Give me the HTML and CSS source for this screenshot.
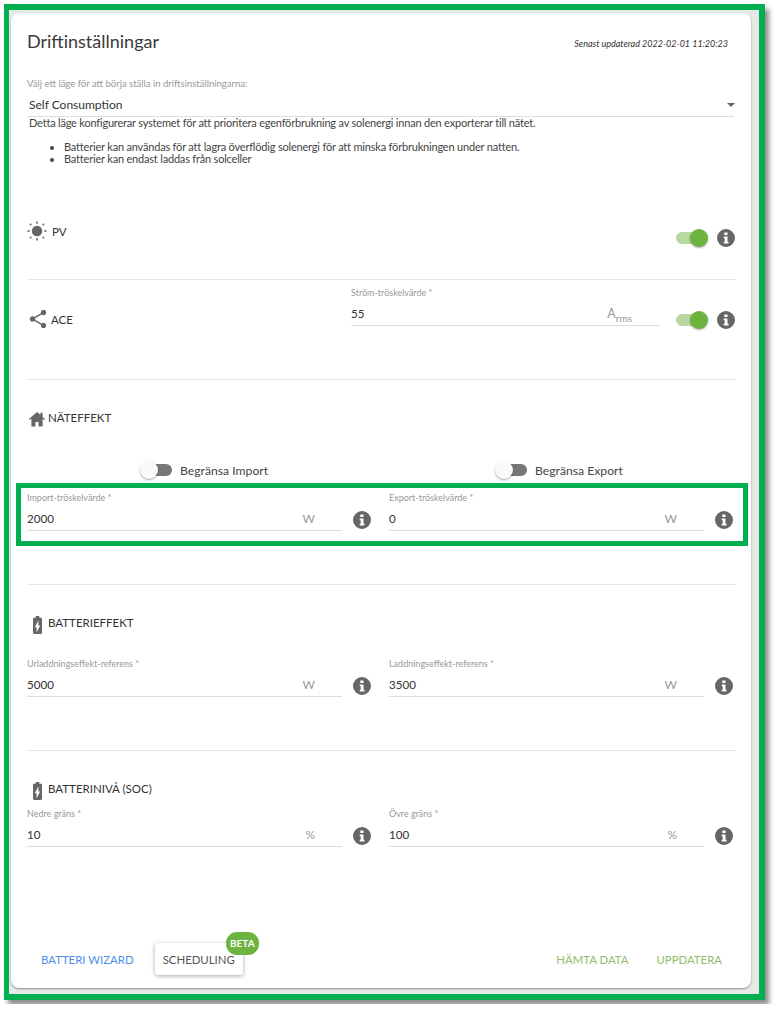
FILE: index.html
```html
<!DOCTYPE html>
<html lang="sv">
<head>
    <meta charset="UTF-8">
    <meta name="viewport" content="width=device-width, initial-scale=1.0">
    <title>Driftinställningar</title>
    <link rel="stylesheet" href="styles.css">
</head>
<body>
<svg class="icon-defs">
    <symbol id="i-sun" viewBox="0 0 20 20">
        <circle cx="10" cy="10" r="5.2"/>
        <rect x="9.2" y="0.5" width="1.6" height="2.2"/>
        <rect x="9.2" y="17.3" width="1.6" height="2.2"/>
        <rect x="0.5" y="9.2" width="2.2" height="1.6"/>
        <rect x="17.3" y="9.2" width="2.2" height="1.6"/>
        <circle cx="3.6" cy="3.6" r="1"/>
        <circle cx="16.4" cy="3.6" r="1"/>
        <circle cx="3.6" cy="16.4" r="1"/>
        <circle cx="16.4" cy="16.4" r="1"/>
    </symbol>
    <symbol id="i-share" viewBox="0 0 24 24">
        <path d="M18 16.08c-.76 0-1.44.3-1.96.77L8.91 12.7c.05-.23.09-.46.09-.7s-.04-.47-.09-.7l7.05-4.11c.54.5 1.25.81 2.04.81 1.66 0 3-1.34 3-3s-1.34-3-3-3-3 1.34-3 3c0 .24.04.47.09.7L8.04 9.81C7.5 9.31 6.79 9 6 9c-1.66 0-3 1.34-3 3s1.34 3 3 3c.79 0 1.5-.31 2.04-.81l7.12 4.16c-.05.21-.08.43-.08.65 0 1.61 1.31 2.92 2.92 2.92 1.61 0 2.92-1.31 2.92-2.92s-1.31-2.92-2.92-2.92z"/>
    </symbol>
    <symbol id="i-home" viewBox="0 0 16 15">
        <path d="M8 .5 0 7.6l.9 1L2.4 7.3V15h4v-4.6h3.2V15h4V7.3l1.5 1.3.9-1-2.4-2.1V1.2h-2.2v2.1z"/>
    </symbol>
    <symbol id="i-battery" viewBox="7 2 10 20">
        <path d="M15.67 4H14V2h-4v2H8.33C7.6 4 7 4.6 7 5.33v15.33C7 21.4 7.6 22 8.33 22h7.33c.74 0 1.34-.6 1.34-1.33V5.33C17 4.6 16.4 4 15.67 4zM11 20v-5.5H9L13 7v5.5h2L11 20z"/>
    </symbol>
    <symbol id="i-info" viewBox="0 0 18 18">
        <path fill-rule="evenodd" d="M9 0a9 9 0 1 0 0 18A9 9 0 0 0 9 0zM7.3 3.4h3.2v2.7H7.3zM6.7 7.4h3.8v5.4h1v1.8H6.7v-1.8h1V9.2h-1z"/>
    </symbol>
</svg>

<div class="frame">
    <div class="card">
        <div class="card-header">
            <h1 class="card-title">Driftinställningar</h1>
            <span class="updated">Senast updaterad 2022-02-01 11:20:23</span>
        </div>

        <div class="mode">
            <div class="field-label mode-label">Välj ett läge för att börja ställa in driftsinställningarna:</div>
            <div class="select">
                <span>Self Consumption</span>
                <span class="caret"></span>
            </div>
            <p class="mode-text">Detta läge konfigurerar systemet för att prioritera egenförbrukning av solenergi innan den exporterar till nätet.</p>
            <ul class="mode-list">
                <li>Batterier kan användas för att lagra överflödig solenergi för att minska förbrukningen under natten.</li>
                <li>Batterier kan endast laddas från solceller</li>
            </ul>
        </div>

        <section class="section section-pv">
            <div class="toggle-row">
                <div class="section-title title-pv">
                    <svg class="icon icon-sun"><use href="#i-sun"/></svg>
                    <span>PV</span>
                </div>
                <div class="controls">
                    <span class="switch switch-on"></span>
                    <svg class="info"><use href="#i-info"/></svg>
                </div>
            </div>
        </section>

        <section class="section section-ace">
            <div class="toggle-row">
                <div class="section-title title-ace">
                    <svg class="icon icon-share"><use href="#i-share"/></svg>
                    <span>ACE</span>
                </div>
                <div class="field field-ace">
                    <div class="field-label">Ström-tröskelvärde *</div>
                    <div class="field-input">
                        <span>55</span>
                        <span class="unit unit-arms">A<sub>rms</sub></span>
                    </div>
                </div>
                <div class="controls controls-ace">
                    <span class="switch switch-on"></span>
                    <svg class="info"><use href="#i-info"/></svg>
                </div>
            </div>
        </section>

        <section class="section section-grid">
            <div class="section-title">
                <svg class="icon icon-home"><use href="#i-home"/></svg>
                <span>NÄTEFFEKT</span>
            </div>
            <div class="fields limits">
                <label class="limit limit-import"><span class="switch"></span>Begränsa Import</label>
                <label class="limit limit-export"><span class="switch"></span>Begränsa Export</label>
            </div>
            <div class="highlight">
                <div class="fields">
                    <div class="field-cell">
                        <div class="field">
                            <div class="field-label">Import-tröskelvärde *</div>
                            <div class="field-input"><span>2000</span><span class="unit">W</span></div>
                        </div>
                        <svg class="info"><use href="#i-info"/></svg>
                    </div>
                    <div class="field-cell">
                        <div class="field">
                            <div class="field-label">Export-tröskelvärde *</div>
                            <div class="field-input"><span>0</span><span class="unit">W</span></div>
                        </div>
                        <svg class="info"><use href="#i-info"/></svg>
                    </div>
                </div>
            </div>
        </section>

        <section class="section section-power">
            <div class="section-title">
                <svg class="icon icon-battery"><use href="#i-battery"/></svg>
                <span>BATTERIEFFEKT</span>
            </div>
            <div class="fields">
                <div class="field-cell">
                    <div class="field">
                        <div class="field-label">Urladdningseffekt-referens *</div>
                        <div class="field-input"><span>5000</span><span class="unit">W</span></div>
                    </div>
                    <svg class="info"><use href="#i-info"/></svg>
                </div>
                <div class="field-cell">
                    <div class="field">
                        <div class="field-label">Laddningseffekt-referens *</div>
                        <div class="field-input"><span>3500</span><span class="unit">W</span></div>
                    </div>
                    <svg class="info"><use href="#i-info"/></svg>
                </div>
            </div>
        </section>

        <section class="section section-soc">
            <div class="section-title">
                <svg class="icon icon-battery"><use href="#i-battery"/></svg>
                <span>BATTERINIVÅ (SOC)</span>
            </div>
            <div class="fields">
                <div class="field-cell">
                    <div class="field">
                        <div class="field-label">Nedre gräns *</div>
                        <div class="field-input"><span>10</span><span class="unit">%</span></div>
                    </div>
                    <svg class="info"><use href="#i-info"/></svg>
                </div>
                <div class="field-cell">
                    <div class="field">
                        <div class="field-label">Övre gräns *</div>
                        <div class="field-input"><span>100</span><span class="unit">%</span></div>
                    </div>
                    <svg class="info"><use href="#i-info"/></svg>
                </div>
            </div>
        </section>

        <div class="card-actions">
            <div class="actions-left">
                <button class="btn btn-blue">BATTERI WIZARD</button>
                <button class="btn btn-raised">SCHEDULING<span class="badge">BETA</span></button>
            </div>
            <div class="actions-right">
                <button class="btn btn-green">HÄMTA DATA</button>
                <button class="btn btn-green">UPPDATERA</button>
            </div>
        </div>
    </div>
</div>
</body>
</html>
```
FILE: styles.css
```css
body {
    font-family: Lato, "Noto Sans", sans-serif;
    font-size: 12px;
    color: #444;
    background: #fff;
    margin: 0;
    padding: 4px;
}
.icon-defs { display: none; }
.frame {
    box-sizing: border-box;
    width: 761px;
    height: 996px;
    border: 6px solid #00b050;
    border-left-width: 5px;
    background: #e8e8e8;
    padding: 3px 8px 6px 2px;
    box-shadow: 4px 5px 5px rgba(0, 0, 0, 0.45);
}
.card {
    display: flex;
    flex-direction: column;
    height: 100%;
    box-sizing: border-box;
    background: #fff;
    border-radius: 8px;
    padding: 0 15px 0 16px;
    box-shadow: 0 1px 2px rgba(0, 0, 0, 0.4);
}
.card-header {
    display: flex;
    justify-content: space-between;
    align-items: center;
    padding-top: 16px;
}
.card-title {
    margin: 0;
    font-size: 18px;
    font-weight: 400;
    line-height: 24px;
    color: #3a3a3a;
}
.updated {
    font-size: 9px;
    font-style: italic;
    color: #333;
    padding: 5px 8px 0 0;
}
.mode { margin-top: 25px; }
.field-label {
    font-size: 9px;
    line-height: 12px;
    color: #999;
    white-space: nowrap;
}
.mode-label { font-size: 9.5px; }
.select {
    display: flex;
    justify-content: space-between;
    align-items: center;
    box-sizing: border-box;
    height: 27px;
    width: 707px;
    padding: 3px 0 0 2px;
    border-bottom: 1px solid #ddd;
    font-size: 12px;
    color: #333;
}
.caret {
    width: 0;
    height: 0;
    border-left: 4px solid transparent;
    border-right: 4px solid transparent;
    border-top: 4px solid #666;
    margin-right: -1px;
}
.mode-text {
    margin: -1px 0 0;
    padding-left: 2px;
    line-height: 14px;
    font-size: 11px;
    letter-spacing: -0.2px;
}
.mode-list {
    margin: 11px 0 0;
    padding-left: 37px;
    line-height: 12px;
    font-size: 11px;
    letter-spacing: -0.19px;
}
.section { border-bottom: 1px solid #e6e6e6; }
.section-pv { height: 115px; box-sizing: border-box; padding-top: 56px; margin-top: 0; }
.section-ace { height: 100px; box-sizing: border-box; padding-top: 7px; }
.section-grid { padding: 27px 0 38px; }
.section-power { padding: 27px 0 53px; }
.section-soc { padding-top: 27px; border-bottom: none; }
.toggle-row {
    display: flex;
    align-items: flex-start;
}
.section-title {
    display: flex;
    align-items: center;
    gap: 3px;
    height: 20px;
    color: #333;
    font-size: 11.5px;
}
.title-pv { gap: 5px; }
.title-ace {
    flex: 0 0 324px;
    margin-top: 22px;
    gap: 2px;
}
.icon { fill: #666; flex: none; }
.icon-sun { width: 20px; height: 20px; }
.icon-share { width: 22px; height: 22px; }
.icon-home { width: 16px; height: 16px; margin: 4px 0 0 2px; }
.icon-battery { width: 9px; height: 18px; margin: 5px 3px 0 6px; }
.controls {
    display: flex;
    align-items: center;
    gap: 9px;
    margin-left: auto;
    height: 22px;
    margin-top: 6px;
    padding-right: 1px;
}
.controls-ace { margin-top: 22px; }
.info {
    display: block;
    flex: none;
    width: 18px;
    height: 18px;
    fill: #666;
}
.switch {
    display: block;
    position: relative;
    flex: none;
    width: 32px;
    height: 18px;
}
.switch::before {
    content: "";
    position: absolute;
    left: 6px;
    right: 0;
    top: 3px;
    height: 12px;
    border-radius: 6px;
    background: #777;
}
.switch::after {
    content: "";
    position: absolute;
    left: 0;
    top: 0;
    width: 18px;
    height: 18px;
    border-radius: 50%;
    background: #fafafa;
    box-shadow: 0 1px 2px rgba(0, 0, 0, 0.35);
}
.switch-on::before {
    left: 0;
    right: 4px;
    background: #b5d9a0;
}
.switch-on::after {
    left: 14px;
    background: #6db33f;
}
.fields {
    display: grid;
    grid-template-columns: 344px 344px;
    column-gap: 18px;
}
.section-power .fields { margin-top: 26px; }
.section-soc .fields { margin-top: 10px; }
.field-cell {
    display: flex;
    align-items: flex-end;
    justify-content: space-between;
}
.field-cell .info { margin-bottom: 2px; }
.field { width: 315px; }
.field-ace { width: 309px; }
.field-input {
    display: flex;
    justify-content: space-between;
    align-items: center;
    box-sizing: border-box;
    height: 27px;
    padding: 2px 27px 0 0;
    border-bottom: 1px solid #ddd;
    font-size: 11.6px;
    color: #333;
}
.field-ace .field-input { padding-right: 28px; }
.unit {
    color: #999;
    font-size: 12px;
}
.unit-arms { font-size: 12.5px; }
.unit sub { font-size: 10px; line-height: 0; }
.limits {
    margin-top: 33px;
    height: 20px;
}
.limit {
    display: flex;
    align-items: center;
    gap: 8px;
    font-size: 12.2px;
    color: #444;
    padding-left: 113px;
}
.limit-export { padding-left: 106px; }
.highlight {
    margin: 3px -12px 0 -11px;
    padding: 4px 7px 10px 6px;
    border: 5px solid #00b050;
}
.card-actions {
    display: flex;
    justify-content: space-between;
    align-items: center;
    margin: auto 6px 13px 6px;
    height: 32px;
}
.actions-left, .actions-right {
    display: flex;
    align-items: center;
}
.actions-left { gap: 13px; }
.actions-right { gap: 12px; }
.btn {
    position: relative;
    height: 32px;
    padding: 0 8px;
    border: none;
    border-radius: 3px;
    background: none;
    font-family: inherit;
    font-size: 11.4px;
    cursor: pointer;
}
.btn-blue { color: #4d8fee; }
.btn-green { color: #8dbf6a; }
.btn-raised {
    color: #555;
    background: #fff;
    box-shadow: 0 1px 4px rgba(0, 0, 0, 0.35);
}
.badge {
    position: absolute;
    top: -11px;
    right: -16px;
    width: 33px;
    height: 23px;
    line-height: 23px;
    border-radius: 11px;
    background: #6db33f;
    color: #fff;
    font-size: 10px;
    font-weight: 700;
    text-align: center;
}
```
